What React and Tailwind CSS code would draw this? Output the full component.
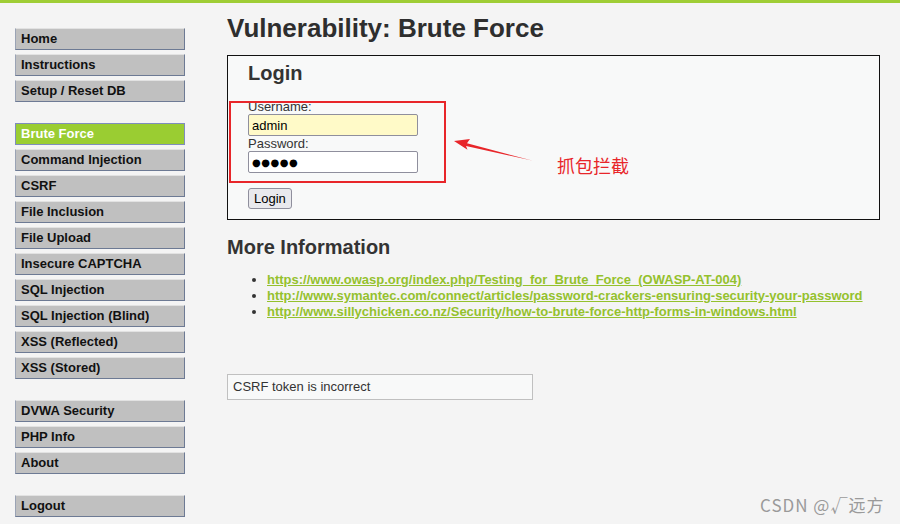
// App.jsx
import React from 'react';

const menuGroups = [
  ['Home', 'Instructions', 'Setup / Reset DB'],
  [
    'Brute Force',
    'Command Injection',
    'CSRF',
    'File Inclusion',
    'File Upload',
    'Insecure CAPTCHA',
    'SQL Injection',
    'SQL Injection (Blind)',
    'XSS (Reflected)',
    'XSS (Stored)',
  ],
  ['DVWA Security', 'PHP Info', 'About'],
  ['Logout'],
];

const links = [
  'https://www.owasp.org/index.php/Testing_for_Brute_Force_(OWASP-AT-004)',
  'http://www.symantec.com/connect/articles/password-crackers-ensuring-security-your-password',
  'http://www.sillychicken.co.nz/Security/how-to-brute-force-http-forms-in-windows.html',
];

// Sidebar menu button
const MenuItem = ({ label }) => {
  const active = label === 'Brute Force';
  return (
    <div
      className={
        active
          ? 'h-[22px] pl-[5px] border border-[#7f8dbd] bg-[#9acd32] text-white text-[13px] font-bold leading-[20px]'
          : 'h-[22px] pl-[5px] border border-t-[#e2e2e2] border-l-[#9aa3b5] border-r-[#6d7a94] border-b-[#6d7a94] bg-[#c0c0c0] text-[#111] text-[13px] font-bold leading-[20px]'
      }
    >
      {label}
    </div>
  );
};

const App = () => {
  return (
    <div className="relative w-[900px] h-[524px] overflow-hidden bg-[#f4f4f4] font-['Liberation_Sans',Arial,sans-serif]">
      <div className="h-[3px] bg-[#9fcd35]" />

      <div className="flex">
        {/* Sidebar */}
        <div className="w-[170px] ml-[15px] pt-[25px] flex flex-col gap-[21px]">
          {menuGroups.map((group, i) => (
            <div key={i} className="flex flex-col gap-[4px]">
              {group.map((label) => (
                <MenuItem key={label} label={label} />
              ))}
            </div>
          ))}
        </div>

        {/* Main body */}
        <div className="w-[653px] ml-[42px] pt-[12px]">
          <h1 className="text-[26px] leading-[26px] font-bold text-[#2e2e2e]">Vulnerability: Brute Force</h1>

          <div className="mt-[14px] border border-[#111] bg-[#f8f9f9] pl-[20px] pb-[10px]">
            <h2 className="mt-[7px] text-[20px] leading-[20px] font-bold text-[#333]">Login</h2>
            <div className="mt-[16px] text-[13px] leading-[15px] text-[#333]">Username:</div>
            <input
              readOnly
              value="admin"
              className="block w-[170px] h-[22px] px-[3px] border border-[#8f8f9d] rounded-[2px] bg-[#fffac8] text-[13px] text-black outline-none"
            />
            <div className="text-[13px] leading-[15px] text-[#333]">Password:</div>
            <input
              readOnly
              value="●●●●●"
              className="block w-[170px] h-[22px] px-[3px] border border-[#8f8f9d] rounded-[2px] bg-white text-[10px] tracking-[0.5px] text-black outline-none font-['DejaVu_Sans',sans-serif]"
            />
            <button className="block mt-[15px] h-[21px] px-[5px] border border-[#8f8f9d] rounded-[3px] bg-[#e9e9ed] text-[13px] leading-[19px] text-black">
              Login
            </button>
          </div>

          <h2 className="mt-[15px] text-[20px] leading-[24px] font-bold text-[#333]">More Information</h2>
          <ul className="mt-[13px] pl-[40px] list-disc text-[#333]">
            {links.map((href) => (
              <li key={href} className="text-[13px] leading-[16px]">
                <a className="font-bold text-[#94c12d] underline" href="#">
                  {href}
                </a>
              </li>
            ))}
          </ul>

          <div className="mt-[54px] w-[306px] h-[26px] border border-[#c0c0c0] bg-[#f8f9f9] pl-[5px] text-[13px] leading-[24px] text-[#333]">
            CSRF token is incorrect
          </div>
        </div>
      </div>

      {/* Annotation overlay */}
      <svg className="absolute left-0 top-0 pointer-events-none" width="900" height="524">
        <rect x="230" y="102" width="215" height="80" fill="none" stroke="#e8262a" strokeWidth="2" />
        <polygon
          points="454,141 470,139 467,143.2 532,160.6 466,146 467.5,149.8"
          fill="#e8262a"
        />
      </svg>
      <div className="absolute left-[557px] top-[154px] text-[18px] leading-[22px] text-[#e8262a] font-['Noto_Sans_CJK_SC',sans-serif]">
        抓包拦截
      </div>

      <div className="absolute left-[760px] top-[494px] text-[17px] leading-[22px] tracking-[1px] text-[#9a9a9a] font-['Noto_Sans_CJK_SC',sans-serif]">
        CSDN @√远方
      </div>
    </div>
  );
};

export default App;
